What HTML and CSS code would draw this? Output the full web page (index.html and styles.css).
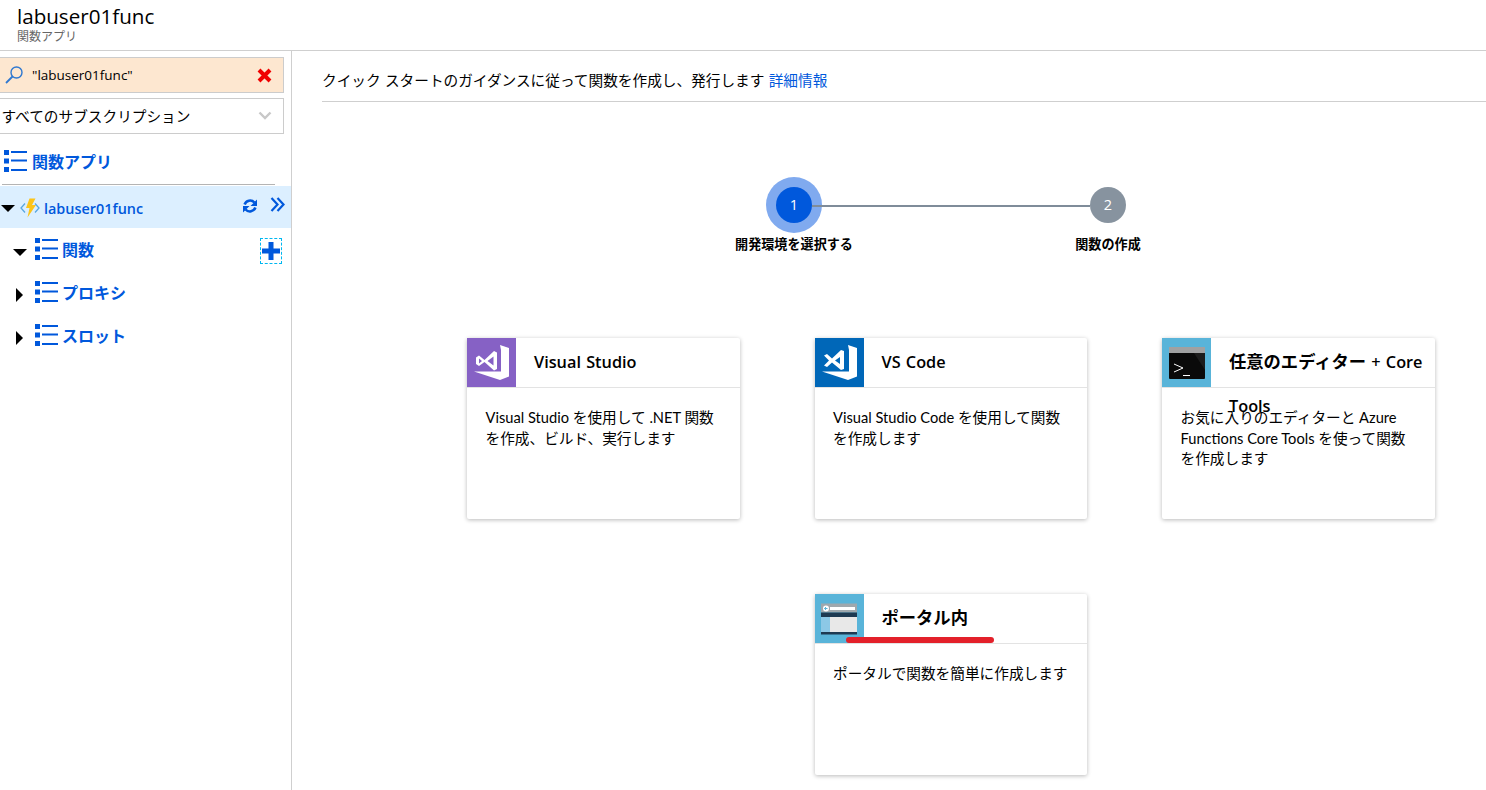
FILE: index.html
```html
<!DOCTYPE html>
<html lang="ja">
<head>
  <meta charset="UTF-8" />
  <title>labuser01func | 関数アプリ</title>
  <link rel="stylesheet" href="styles.css">
</head>
<body>
  <svg class="defs" width="0" height="0">
    <symbol id="list" viewBox="0 0 23 22">
      <path fill="#0058dc" d="M0 0h5v5H0zM0 8.500h5v5H0zM0 17h5v5H0zM7 1h16v2H7zM7 9.500h16v2H7zM7 19h16v2H7z"/>
    </symbol>
  </svg>

  <header class="top-bar">
    <div class="app-name">labuser01func</div>
    <div class="app-type">関数アプリ</div>
  </header>

  <div class="content">
    <aside class="sidebar">
      <div class="search-box">
        <svg class="search-icon" width="20" height="20" viewBox="0 0 20 20">
          <circle cx="12.500" cy="7.500" r="5.500" fill="none" stroke="#2f78d0" stroke-width="1.400"/>
          <path d="M8.500 11.500L2 18" stroke="#2f78d0" stroke-width="1.800"/>
        </svg>
        <span class="search-text">"labuser01func"</span>
        <svg class="clear-icon" width="15" height="15" viewBox="0 0 15 15">
          <path d="M2 2l11 11M13 2L2 13" stroke="#f00000" stroke-width="4"/>
        </svg>
      </div>
      <div class="select-box">
        <span>すべてのサブスクリプション</span>
        <svg width="14" height="9" viewBox="0 0 14 9">
          <path d="M1.500 1.500L7 7l5.500-5.500" fill="none" stroke="#c8c8c8" stroke-width="2.400"/>
        </svg>
      </div>
      <div class="apps-link">
        <svg class="list-icon" width="23" height="22"><use href="#list"/></svg>
        <span>関数アプリ</span>
      </div>
      <div class="side-rule"></div>

      <div class="tree-root">
        <span class="tri-down"></span>
        <svg class="func-icon" width="20" height="20" viewBox="0 0 20 20">
          <path d="M5 5.500L1 10l4 4.500M15 5.500l4 4.500-4 4.500" fill="none" stroke="#59a7e0" stroke-width="1.300"/>
          <path d="M9.500 0.500h6l-3.500 6.500h4L7.500 19.500l2-9.500H6z" fill="#fcc419"/>
        </svg>
        <span class="root-name">labuser01func</span>
        <svg class="sync-icon" width="16" height="16" viewBox="0 0 16 16">
          <path d="M2.600 6.500A5.800 5.800 0 0 1 12.400 4.500M13.400 9.500A5.800 5.800 0 0 1 3.600 11.500" fill="none" stroke="#0058dc" stroke-width="2.600"/>
          <path d="M15 1.500V8H8.500zM1 14.500V8h6.500z" fill="#0058dc"/>
        </svg>
        <svg class="collapse-icon" width="15" height="15" viewBox="0 0 15 15">
          <path d="M1.500 1L7.500 7.500 1.500 14M7.500 1L13.500 7.500 7.500 14" fill="none" stroke="#0058dc" stroke-width="2.200"/>
        </svg>
      </div>

      <div class="tree-row">
        <span class="tri-down child-tri"></span>
        <svg class="list-icon" width="23" height="22"><use href="#list"/></svg>
        <span class="row-name">関数</span>
        <span class="add-btn">
          <svg width="18" height="18" viewBox="0 0 18 18">
            <path d="M6.500 0h5v6.500H18v5h-6.500V18h-5v-6.500H0v-5h6.500z" fill="#0058dc"/>
          </svg>
        </span>
      </div>
      <div class="tree-row">
        <span class="tri-right"></span>
        <svg class="list-icon" width="23" height="22"><use href="#list"/></svg>
        <span class="row-name">プロキシ</span>
      </div>
      <div class="tree-row">
        <span class="tri-right"></span>
        <svg class="list-icon" width="23" height="22"><use href="#list"/></svg>
        <span class="row-name">スロット</span>
      </div>
    </aside>

    <main class="main">
      <div class="intro">クイック スタートのガイダンスに従って関数を作成し、発行します <a href="#">詳細情報</a></div>

      <div class="stepper">
        <div class="step">
          <div class="step-num active">1</div>
          <div class="step-label">開発環境を選択する</div>
        </div>
        <div class="step-line"></div>
        <div class="step">
          <div class="step-num">2</div>
          <div class="step-label">関数の作成</div>
        </div>
      </div>

      <div class="cards">
        <div class="card">
          <div class="card-head">
            <svg class="tile" width="49" height="49" viewBox="0 0 49 49">
              <rect width="49" height="49" fill="#8661c5"/>
              <path fill="#fff" d="M33 7l9 3v28.500L33 42 7 33.500h27V12z"/>
              <path fill="#fff" fill-rule="evenodd" d="M9 19.500l3-2 5.500 4.500L27 13l3 1.500V31l-3 1.500L17.500 24 12 28l-3-2zM12 20.500v5l3-2.500zM20.500 23l6 4.500v-9z"/>
            </svg>
            <div class="card-title">Visual Studio</div>
          </div>
          <div class="card-body">Visual Studio を使用して .NET 関数を作成、ビルド、実行します</div>
        </div>

        <div class="card">
          <div class="card-head">
            <svg class="tile" width="49" height="49" viewBox="0 0 49 49">
              <rect width="49" height="49" fill="#0067b8"/>
              <path fill="#fff" d="M33 7l9 3v28.500L33 42 7 33.500h27V12z"/>
              <path fill="#fff" fill-rule="evenodd" d="M9 17.500l3-1.500 5 4.500L26 12l3 1v18l-3 1-9-7.500L12 29l-3-1.500 5-5zM20 22.500l5 3.500v-7z"/>
            </svg>
            <div class="card-title">VS Code</div>
          </div>
          <div class="card-body">Visual Studio Code を使用して関数を作成します</div>
        </div>

        <div class="card">
          <div class="card-head">
            <svg class="tile" width="49" height="49" viewBox="0 0 49 49">
              <rect width="49" height="49" fill="#59b4d9"/>
              <rect x="7" y="9" width="36" height="32" rx="1" fill="#0a0a0a"/>
              <rect x="7" y="9" width="36" height="6" fill="#a0a1a2"/>
              <path d="M32 15h11v17z" fill="#1c1c1c"/>
              <path d="M12 26l9 4-9 4M21 37.500h7" fill="none" stroke="#fff" stroke-width="1"/>
            </svg>
            <div class="card-title"><span class="jp">任意のエディター</span> + Core Tools</div>
          </div>
          <div class="card-body">お気に入りのエディターと Azure Functions Core Tools を使って関数を作成します</div>
        </div>

        <div class="card portal-card">
          <div class="card-head">
            <svg class="tile" width="49" height="49" viewBox="0 0 49 49">
              <rect width="49" height="49" fill="#59b4d9"/>
              <rect x="6" y="9.500" width="36" height="9" fill="#9fa8ad"/>
              <rect x="15" y="13" width="25" height="3" fill="#fff"/>
              <circle cx="11" cy="14.500" r="3" fill="#fff"/>
              <path d="M12.500 14.500h-3M11 13l-1.500 1.500L11 16" fill="none" stroke="#59b4d9" stroke-width="1"/>
              <rect x="6" y="18.500" width="36" height="4.500" fill="#1e3a52"/>
              <rect x="6" y="23" width="9" height="15" fill="#8cc8e6"/>
              <rect x="15" y="23" width="27" height="15" fill="#e8e8e8"/>
              <rect x="6" y="38" width="36" height="2.500" fill="#1e3a52"/>
            </svg>
            <div class="card-title jp-title">ポータル内</div>
          </div>
          <div class="card-body">ポータルで関数を簡単に作成します</div>
          <div class="red-mark"></div>
        </div>
      </div>
    </main>
  </div>
</body>
</html>
```

FILE: styles.css
```css
* { box-sizing: border-box; }
html, body { height: 100%; }
body { margin: 0; background: #fff; color: #000; font-family: "Open Sans", "Noto Sans CJK JP", sans-serif; font-size: 14.67px; overflow: hidden; }
a { color: #0058dc; text-decoration: none; }
.defs { position: absolute; }

.top-bar { height: 51px; padding: 3px 0 0 17px; border-bottom: 1px solid #cfcfcf; }
.app-name { font-size: 20.600px; line-height: 26px; }
.app-type { font-size: 12px; line-height: 16px; color: #666; }

.content { display: flex; height: 739px; }

.sidebar { width: 292px; flex: none; padding-top: 6px; border-right: 1px solid #cfcfcf; }
.search-box { display: flex; align-items: center; width: 284px; height: 36px; padding: 0 11px 0 4px; background: #fde7d0; border: 1px solid #ccc; border-left: none; }
.search-text { margin-left: 8px; font-size: 13.500px; }
.clear-icon { margin-left: auto; }
.select-box { display: flex; align-items: center; justify-content: space-between; width: 284px; height: 36px; margin-top: 5px; padding: 0 11px 2px 1.500px; border: 1px solid #ccc; border-left: none; }
.apps-link { display: flex; align-items: center; gap: 5px; height: 50px; padding: 3px 0 0 4px; color: #0058dc; font-size: 16px; font-weight: 700; }
.side-rule { width: 273px; margin-left: 2px; border-top: 1px solid #b4b4b4; }

.tree-root { display: flex; align-items: center; height: 42px; margin-top: 1px; padding-top: 2px; background: #dcefff; color: #0058dc; }
.root-name { margin-left: 4px; font-size: 14.400px; font-weight: 600; }
.func-icon { margin-left: 5px; }
.sync-icon { margin-left: auto; margin-top: -5px; }
.collapse-icon { margin: -8px 6px 0 12px; }
.tri-down { width: 0; height: 0; margin-left: 1px; border-left: 7px solid transparent; border-right: 7px solid transparent; border-top: 7px solid #000; }

.tree-row { display: flex; align-items: center; height: 43px; padding: 0 9px 2px 16px; color: #0058dc; font-size: 16px; font-weight: 700; }
.tree-row .list-icon { margin-left: 12px; }
.tree-row .child-tri { margin: 8px 0 0 -3px; }
.tree-row .child-tri + .list-icon { margin-left: 8px; }
.row-name { margin-left: 4px; }
.tri-right { width: 0; height: 0; margin-top: 6px; border-top: 7px solid transparent; border-bottom: 7px solid transparent; border-left: 7px solid #000; }
.add-btn { display: flex; align-items: center; justify-content: center; width: 22px; height: 26px; margin: 5px 0 0 auto; border: 1px dashed #00b7f0; }

.main { flex: 1; min-width: 0; padding: 0 0 0 30px; }
.intro { height: 51px; padding-top: 18px; line-height: 22px; word-spacing: 0.500px; border-bottom: 1px solid #cfcfcf; }

.stepper { display: flex; width: 350px; margin: 85px 0 0 454px; }
.step { display: flex; flex-direction: column; align-items: center; width: 36px; flex: none; }
.step-num { width: 36px; height: 36px; border-radius: 50%; background: #87939f; color: #fff; font-size: 14.500px; line-height: 36px; text-align: center; }
.step-num.active { background: #0058dc; box-shadow: 0 0 0 10px #80aaef; }
.step-label { margin-top: 12px; font-size: 13.100px; font-weight: 700; line-height: 18px; white-space: nowrap; }
.step-line { flex: 1; height: 2px; margin-top: 18px; background: #7f8c99; }

.cards { display: grid; grid-template-columns: repeat(3, 272.500px); gap: 75px; margin: 85px 0 0 145px; }
.card { position: relative; height: 181px; border-radius: 2px; box-shadow: 0 1px 4px rgba(0,0,0,0.28); }
.card-head { display: flex; height: 50px; border-bottom: 1px solid #e3e3e3; }
.tile { flex: none; }
.card-title { min-width: 0; padding: 2px 0 0 18px; font-size: 16.300px; font-weight: 600; line-height: 44px; word-spacing: 1px; }
.card-title .jp { font-size: 17.300px; font-weight: 700; }
.card-body { padding: 20px 18px 0 18.500px; font-family: Lato, "Noto Sans CJK JP", sans-serif; line-height: 20.700px; }
.portal-card { grid-column: 2; }
.card-title.jp-title { font-size: 17.300px; font-weight: 700; }
.red-mark { position: absolute; left: 31px; top: 43px; width: 148px; height: 6px; border-radius: 3px; background: #e3202a; }
```
